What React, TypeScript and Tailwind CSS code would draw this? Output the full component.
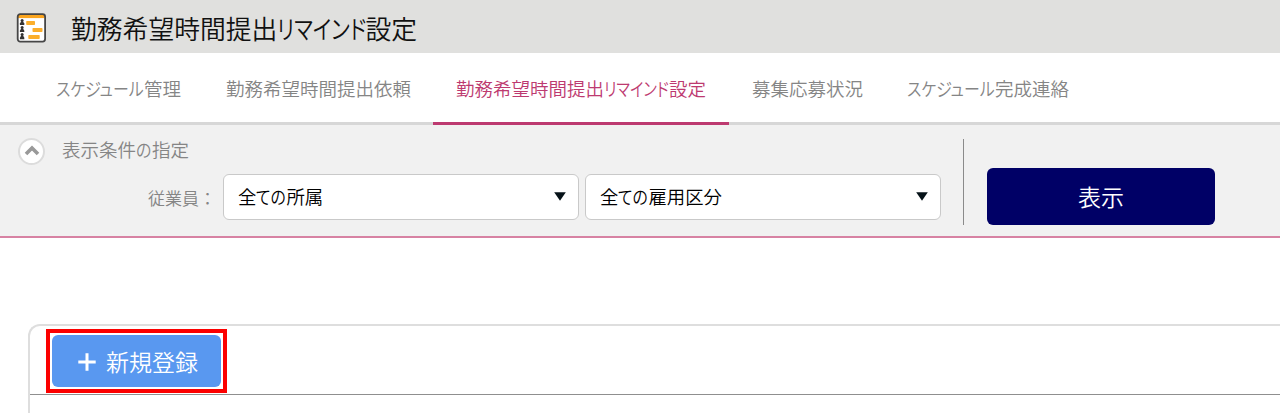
import React from 'react';
import { ChevronUp } from 'lucide-react';

interface KanaProps {
  className: string;
  scale?: string;
  children: React.ReactNode;
}

// Kana are set narrower than the kanji around them
const Kana: React.FC<KanaProps> = ({ className, scale = 'scale-x-[0.86]', children }) => (
  <span className={`inline-block whitespace-nowrap ${className}`}>
    <span className={`inline-block origin-left [font-feature-settings:'palt'] ${scale}`}>{children}</span>
  </span>
);

const ScheduleIcon: React.FC = () => (
  <svg width="30" height="30" viewBox="0 0 30 30" fill="none">
    <rect x="1.7" y="1.2" width="27.4" height="27.4" rx="2.5" fill="#fff" />
    <path d="M2 1.5h26.6v3.6H2z" fill="#fba51e" />
    <rect x="1.7" y="1.2" width="27.4" height="27.4" rx="2.5" stroke="#464646" strokeWidth="1.8" />
    {[5.6, 12.7, 19.8].map((y) => (
      <g key={y} fill="#333">
        <circle cx="6.1" cy={y + 1.8} r="1.5" />
        <path d={`M3.9 ${y + 6.4}v-1.4l1.3-2.2h1.8l1.3 2.2V${y + 6.4}z`} />
      </g>
    ))}
    <rect x="10.2" y="8" width="8.8" height="4" rx="0.7" fill="#fbae2b" />
    <rect x="16.5" y="15" width="10" height="4" rx="0.7" fill="#fbae2b" />
    <rect x="12.3" y="22" width="11.4" height="4" rx="0.7" fill="#fbae2b" />
  </svg>
);

interface SelectBoxProps {
  children: React.ReactNode;
}

const SelectBox: React.FC<SelectBoxProps> = ({ children }) => (
  <button className="flex h-[46px] w-[356px] items-center justify-between rounded-md border border-[#c9c9c9] bg-white pl-[14px] pr-3 text-left text-[18.4px] text-black">
    <span>{children}</span>
    <svg width="12" height="9" viewBox="0 0 12 9" fill="#061218" className="-mt-[2px]">
      <path d="M0.2 0.3h11.6L6 8.8z" />
    </svg>
  </button>
);

export default function App() {
  return (
    <div className="h-[413px] w-full overflow-hidden bg-white font-['Noto_Sans_CJK_JP','Liberation_Sans',sans-serif] font-[350]">
      <header className="flex h-[53px] items-center bg-[#e0e0de] pl-[16px] pt-[2px]">
        <ScheduleIcon />
        <h1 className="ml-[25px] whitespace-nowrap text-[25.8px] leading-[51px] text-[#111]">
          勤務希望時間提出<Kana className="w-[88px]" scale="scale-x-[0.81]">リマインド</Kana>設定
        </h1>
      </header>

      <nav className="flex h-[72px] border-b-[3px] border-[#d7d7d7] whitespace-nowrap text-[18.5px] leading-[71px] text-[#858585]">
        <a className="ml-[56px] w-[170px]">
          <Kana className="w-[88px]">スケジュール</Kana>管理
        </a>
        <a className="w-[207px]">勤務希望時間提出依頼</a>
        <a className="h-[72px] w-[296px] border-b-[3px] border-[#bd3a70] pl-[23px] text-[#bd3a70]">
          勤務希望時間提出<Kana className="w-[65px]" scale="scale-x-[0.82]">リマインド</Kana>設定
        </a>
        <a className="ml-[23px] w-[155px]">募集応募状況</a>
        <a>
          <Kana className="w-[88px]">スケジュール</Kana>完成連絡
        </a>
      </nav>

      <section className="flex h-[113px] border-b-2 border-[#d782a3] bg-[#f1f1f1]">
        <div className="w-[963px] pl-[18px]">
          <div className="flex h-[49px] items-center">
            <button className="mt-[4px] flex h-[27px] w-[27px] items-center justify-center rounded-full border-2 border-[#dcdcdc] bg-white">
              <ChevronUp className="-mt-[1px] h-[24px] w-[24px] shrink-0 text-[#999]" strokeWidth={3.6} strokeLinecap="butt" strokeLinejoin="miter" />
            </button>
            <h2 className="ml-[17px] text-[18.5px] text-[#858585]">
              表示条件<Kana className="w-[16px]">の</Kana>指定
            </h2>
          </div>
          <div className="flex items-center">
            <span className="ml-[130px] w-[75px] whitespace-nowrap pt-[2px] text-[17px] text-[#858585]">従業員：</span>
            <div className="flex gap-[6px]">
              <SelectBox>
                全<Kana className="w-[30px]">ての</Kana>所属
              </SelectBox>
              <SelectBox>
                全<Kana className="w-[30px]">ての</Kana>雇用区分
              </SelectBox>
            </div>
          </div>
        </div>
        <div className="mt-[14px] h-[86px] border-l border-[#8b8b8b]" />
        <button className="ml-[23px] mt-[43px] h-[57px] w-[228px] rounded-md bg-[#000066] text-[23px] text-white">表示</button>
      </section>

      <main className="pl-[28px] pt-[86px]">
        <div className="h-[100px] rounded-tl-xl border-l-2 border-t-2 border-[#dedede]">
          <div className="flex h-[69px] border-b border-[#8f8f8f] pl-[16px] pt-[3px]">
            <div className="h-[64px] w-[181px] border-4 border-[#fc0000] p-[2px]">
              <button className="flex h-[52px] w-[169px] items-center rounded-md bg-[#5998f0] pl-[26px] text-[23px] text-white">
                <svg width="18" height="18" viewBox="0 0 18 18" stroke="#fff" strokeWidth="3" className="mt-[2px]">
                  <path d="M9 0.3v17.4M0.3 9h17.4" />
                </svg>
                <span className="ml-[10px] whitespace-nowrap pt-px">新規登録</span>
              </button>
            </div>
          </div>
        </div>
      </main>
    </div>
  );
}
